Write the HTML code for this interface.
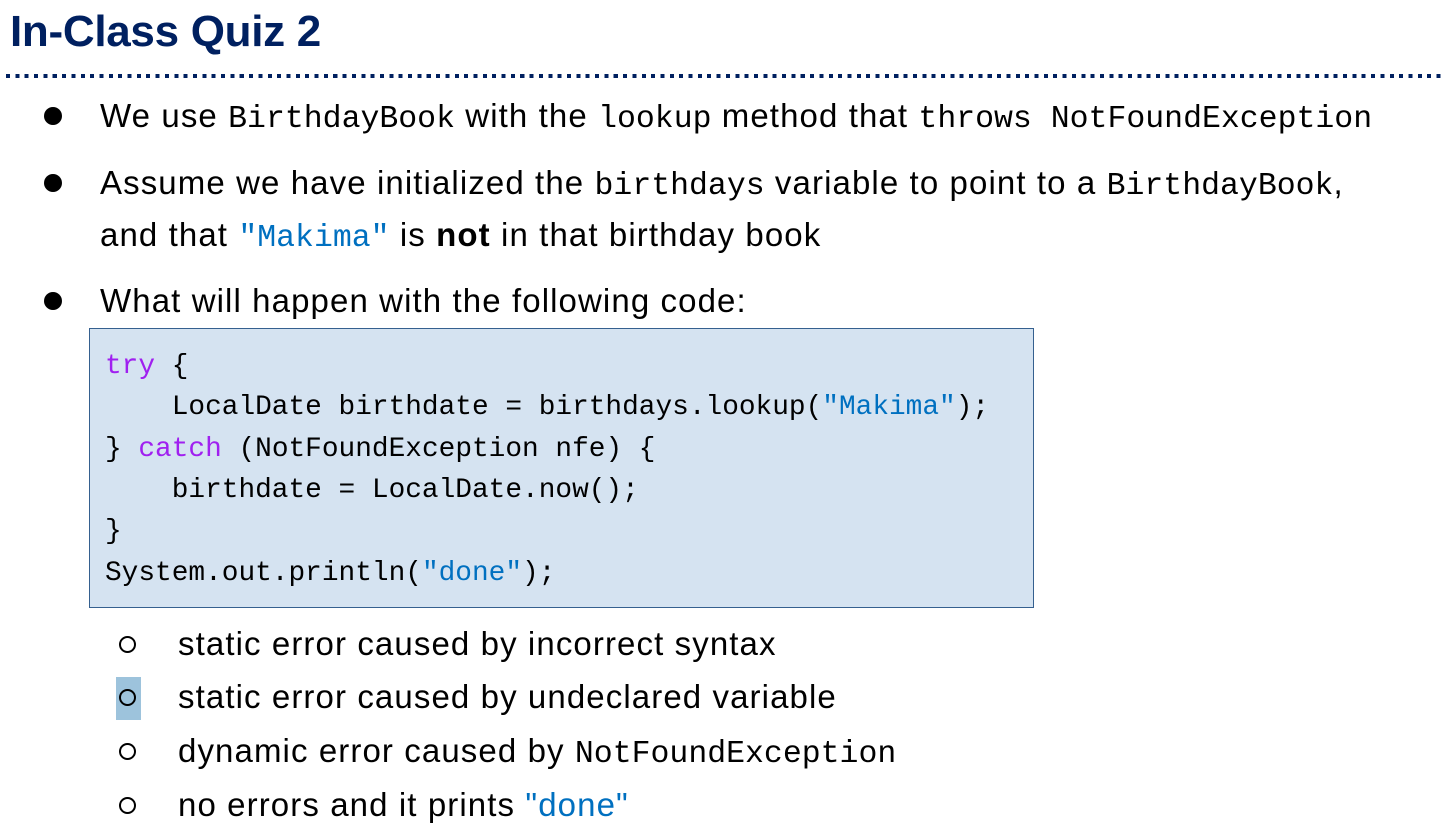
<!DOCTYPE html>
<html><head><meta charset="utf-8"><style>
body{margin:0;width:1443px;height:829px;background:#fff;position:relative;overflow:hidden;font-family:"Liberation Sans",sans-serif;color:#000}
.l{position:absolute;white-space:pre;line-height:40px;height:40px;font-size:33px;letter-spacing:1.1px}
.m{font-family:"Liberation Mono",monospace;font-size:31.5px;letter-spacing:0}
.c{position:absolute;white-space:pre;font-family:"Liberation Mono",monospace;font-size:27.8px;line-height:40px;height:40px;left:105px}
.b{position:absolute;width:18px;height:18px;border-radius:50%;background:#000}
.o{position:absolute;width:13px;height:13px;border-radius:50%;border:2.5px solid #000;left:119px}
.s{color:#0070c0}.k{color:#a020f0}
</style></head><body>
<div style="position:absolute;left:10px;top:7px;font-size:44px;font-weight:bold;color:#002060;line-height:50px;letter-spacing:-0.3px">In-Class Quiz 2</div>
<div style="position:absolute;left:6px;top:74px;width:1437px;height:4px;background:repeating-linear-gradient(90deg,#002060 0 4px,transparent 4px 9.35px)"></div>
<div class="b" style="left:44px;top:107px"></div>
<div class="l" style="left:100px;top:96px">We use <span class="m">BirthdayBook</span> with the <span class="m">lookup</span> method that <span class="m">throws NotFoundException</span></div>
<div class="b" style="left:44px;top:174px"></div>
<div class="l" style="left:100px;top:163px">Assume we have initialized the <span class="m">birthdays</span> variable to point to a <span class="m">BirthdayBook</span>,</div>
<div class="l" style="left:100px;top:215px">and that <span class="m s">"Makima"</span> is <b>not</b> in that birthday book</div>
<div class="b" style="left:44px;top:292px"></div>
<div class="l" style="left:100px;top:281px">What will happen with the following code:</div>
<div style="position:absolute;left:89px;top:328px;width:943px;height:278px;background:#d5e3f1;border:1.5px solid #35608f"></div>
<div class="c" style="top:347px"><span class="k">try</span> {</div>
<div class="c" style="top:388px">    LocalDate birthdate = birthdays.lookup(<span class="s">"Makima"</span>);</div>
<div class="c" style="top:430px">} <span class="k">catch</span> (NotFoundException nfe) {</div>
<div class="c" style="top:471px">    birthdate = LocalDate.now();</div>
<div class="c" style="top:512px">}</div>
<div class="c" style="top:554px">System.out.println(<span class="s">"done"</span>);</div>
<div style="position:absolute;left:116px;top:677px;width:25px;height:43px;background:#9dc3dc"></div>
<div class="o" style="top:636px"></div>
<div class="l" style="left:178px;top:624px">static error caused by incorrect syntax</div>
<div class="o" style="top:689px"></div>
<div class="l" style="left:178px;top:677px">static error caused by undeclared variable</div>
<div class="o" style="top:743px"></div>
<div class="l" style="left:178px;top:731px">dynamic error caused by <span class="m">NotFoundException</span></div>
<div class="o" style="top:797px"></div>
<div class="l" style="left:178px;top:785px">no errors and it prints <span class="s">"done"</span></div>
</body></html>
